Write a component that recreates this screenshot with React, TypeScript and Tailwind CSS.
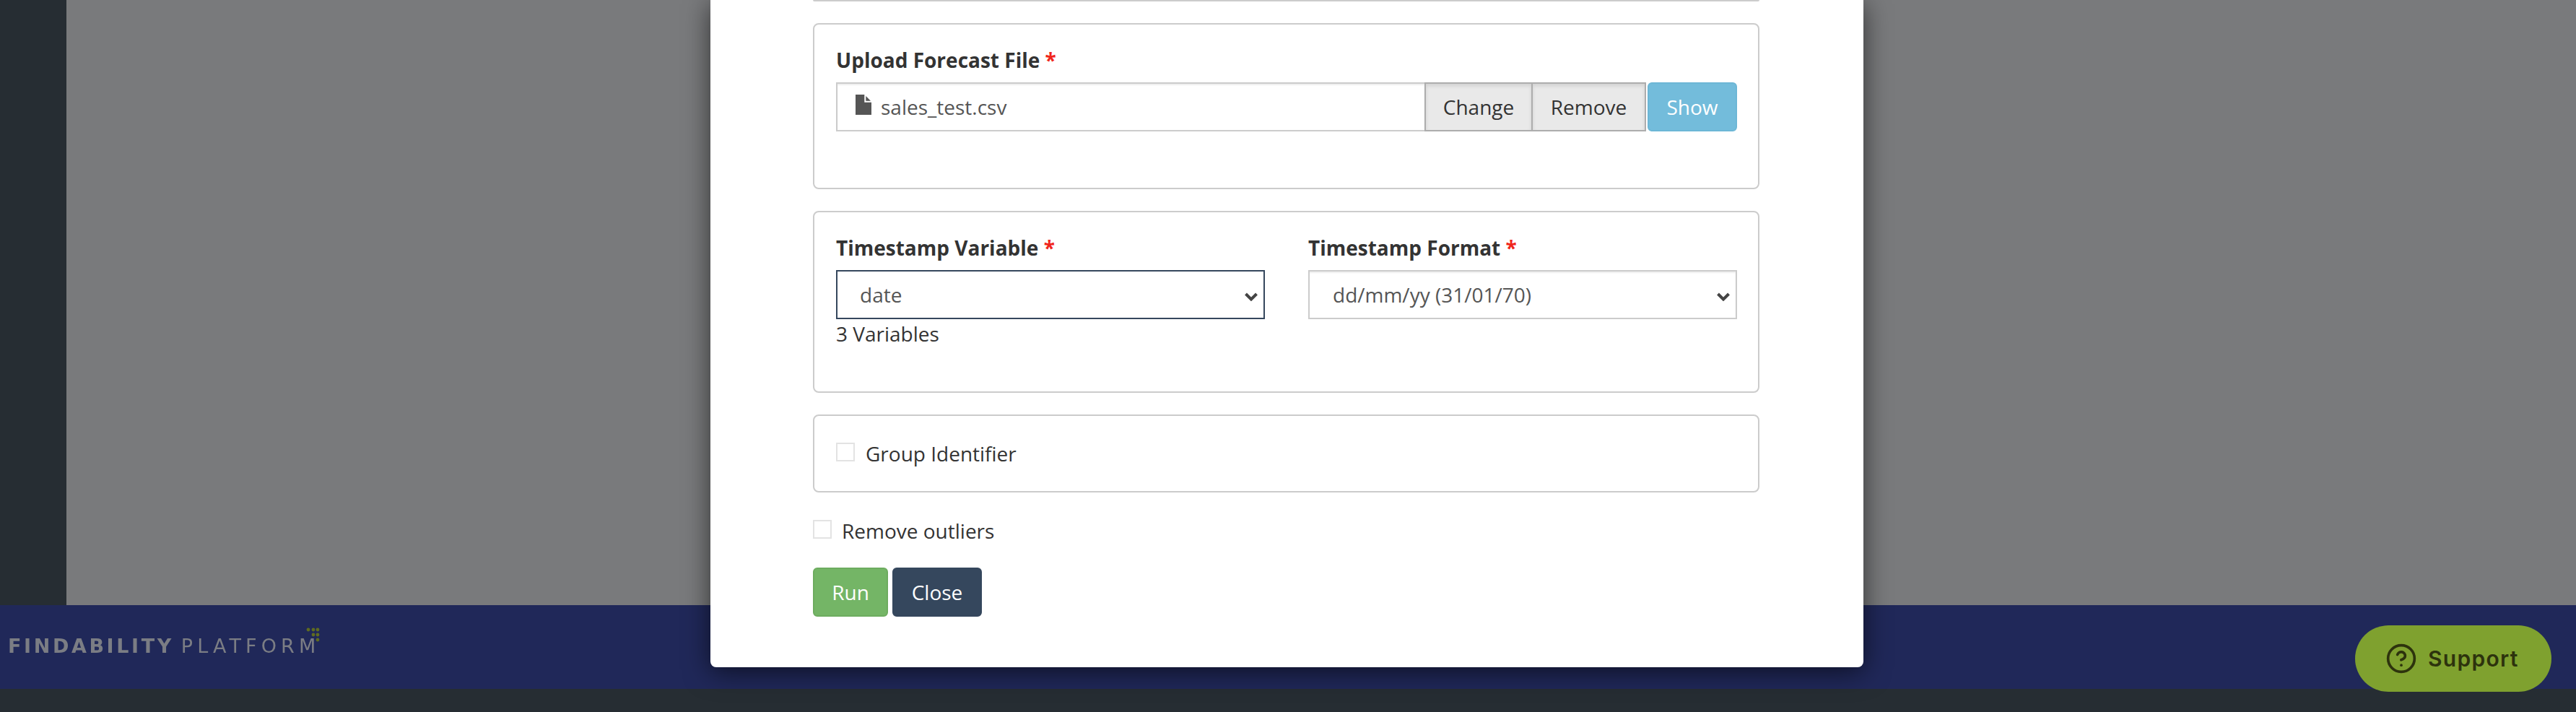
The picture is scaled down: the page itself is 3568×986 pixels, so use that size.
import { CircleHelp } from "lucide-react";

const Required = () => <span className="text-[#f0261c]">*</span>;

const Panel = ({ className, children }: { className: string; children: React.ReactNode }) => (
  <div className={`rounded-lg border-2 border-[#ccc] ${className}`}>{children}</div>
);

const Check = () => <span className="h-[26px] w-[26px] shrink-0 border-2 border-[#e3e3e3] bg-white" />;

const Chevron = () => (
  <svg
    className="pointer-events-none absolute top-[29px] right-[8px]"
    width="18"
    height="12"
    viewBox="0 0 18 12"
    fill="none"
    stroke="#444"
    strokeWidth="4"
  >
    <path d="M1.5 2 L9 9.5 L16.5 2" />
  </svg>
);

const SelectBox = ({ value, focused, pad }: { value: string; focused?: boolean; pad: string }) => (
  <div
    className={`relative flex h-[68px] items-center border-2 text-[#555] ${pad} ${
      focused ? "border-[#35475d]" : "border-[#ccc] shadow-[inset_0_2px_2px_rgba(0,0,0,0.07)]"
    }`}
  >
    {value}
    <Chevron />
  </div>
);

const App = () => {
  return (
    <div className="relative h-[986px] w-[3568px] overflow-hidden bg-[#262d33] font-['Open_Sans',sans-serif] text-[28px] leading-[40px] text-[#333]">
      <div className="flex h-[838px]">
        <div className="w-[92px] bg-[#262d33]" />
        <div className="flex-1 bg-[#797a7c]" />
      </div>
      <div className="flex h-[116px] items-center bg-[#202859] pb-[2px] pl-[11px] font-['DejaVu_Sans',sans-serif] text-[27px] text-[#7b7d84] blur-[0.5px]">
        <span className="font-bold tracking-[3.6px]">FINDABILITY</span>
        <span className="ml-[10px] tracking-[6.1px]">PLATFORM</span>
        <svg className="mb-[32px] -ml-[19px]" width="20" height="20" viewBox="0 0 20 20" fill="#5f6b20">
          <circle cx="3" cy="3" r="2.4" />
          <circle cx="10" cy="3" r="2.4" />
          <circle cx="16" cy="3" r="2.4" />
          <circle cx="10" cy="10" r="2.4" />
          <circle cx="16" cy="10" r="2.4" />
          <circle cx="16" cy="17" r="2.4" />
        </svg>
      </div>

      <div className="absolute top-0 left-[984px] w-[1597px] rounded-b-lg bg-white pr-[144px] pb-[70px] pl-[142px] shadow-[0_6px_36px_rgba(0,0,0,0.6)]">
        <div className="h-[2px] rounded-b-lg bg-[#ccc]" />

        <Panel className="mt-[30px] h-[230px] pt-[29px] pr-[29px] pl-[30px]">
          <div className="font-bold">
            Upload Forecast File <Required />
          </div>
          <div className="mt-[11px] flex h-[68px]">
            <div className="flex flex-1 items-center gap-[13px] border-2 border-r-0 border-[#ccc] pl-[25px] text-[#555] shadow-[inset_0_2px_2px_rgba(0,0,0,0.07)]">
              <svg className="mb-[6px]" width="22" height="28" viewBox="0 0 22 28" fill="#555">
                <path d="M0 0H12.3V10.7H22V28H0Z" />
                <path d="M14.3 2L21 8.7H14.3Z" />
              </svg>
              sales_test.csv
            </div>
            <button className="w-[150px] border-2 border-[#adadad] bg-[#e9e9e9] text-[#333] shadow-[inset_0_3px_5px_rgba(0,0,0,0.1)]">
              Change
            </button>
            <button className="w-[157px] border-2 border-l-0 border-[#adadad] bg-[#e9e9e9] text-[#333] shadow-[inset_0_3px_5px_rgba(0,0,0,0.1)]">
              Remove
            </button>
            <button className="ml-[2px] w-[124px] rounded-md border-2 border-[#6db7d6] bg-[#73bcdb] text-white">
              Show
            </button>
          </div>
        </Panel>

        <Panel className="mt-[30px] h-[252px] pt-[29px] pr-[29px] pl-[30px]">
          <div className="grid grid-cols-[594px_594px] gap-x-[60px]">
            <div>
              <div className="font-bold">
                Timestamp Variable <Required />
              </div>
              <div className="mt-[11px]">
                <SelectBox value="date" focused pad="pl-[31px]" />
              </div>
              <div>3 Variables</div>
            </div>
            <div>
              <div className="font-bold">
                Timestamp Format <Required />
              </div>
              <div className="mt-[11px]">
                <SelectBox value="dd/mm/yy (31/01/70)" pad="pl-[32px]" />
              </div>
            </div>
          </div>
        </Panel>

        <Panel className="mt-[30px] flex h-[108px] items-center gap-[15px] pl-[30px]">
          <span className="mb-[4px] flex">
            <Check />
          </span>
          Group Identifier
        </Panel>

        <div className="mt-[33px] flex h-[40px] items-center gap-[14px]">
          <span className="mb-[4px] flex">
            <Check />
          </span>
          Remove outliers
        </div>

        <div className="mt-[31px] flex h-[68px] gap-[6px]">
          <button className="w-[104px] rounded-md border-2 border-[#6dac5f] bg-[#74b566] text-white">Run</button>
          <button className="w-[124px] rounded-md border-2 border-[#35475d] bg-[#35475d] text-white">Close</button>
        </div>
      </div>

      <div className="absolute top-[866px] left-[3262px] flex h-[92px] w-[272px] items-center gap-[15px] rounded-full bg-[#7fa12f] pl-[42px] font-['Inter',sans-serif] text-[30px] font-semibold tracking-[1.3px] text-[#2d330d]">
        <CircleHelp size={44} strokeWidth={2} />
        Support
      </div>
    </div>
  );
};

export default App;
